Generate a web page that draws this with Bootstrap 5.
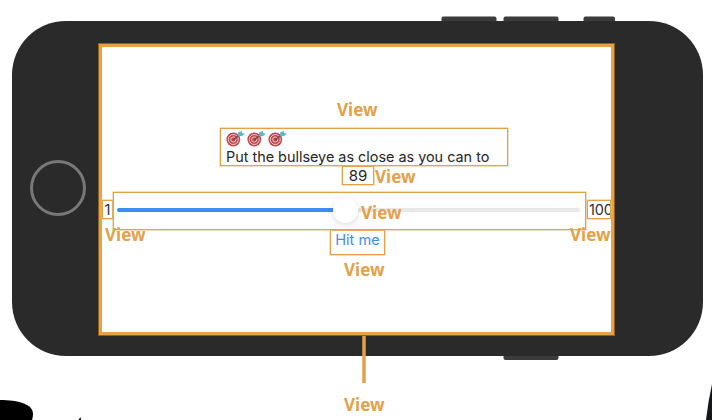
<!DOCTYPE html>
<html lang="en">
<head>
<meta charset="utf-8">
<meta name="viewport" content="width=device-width, initial-scale=1">
<title>Bullseye view hierarchy</title>
<link rel="stylesheet" href="https://cdn.jsdelivr.net/npm/bootstrap@5.3.0/dist/css/bootstrap.min.css">
<style>
  :root { --line: #e3a14a; --shell: #2a2a2a; }
  body { width: 712px; height: 420px; background: #fff; font-family: Inter, "Liberation Sans", sans-serif; }
  .phone-wrap { padding: 21px 9px 0 12px; }
  .phone { height: 335px; border-radius: 54px; background: var(--shell); padding: 22px 88px 20px 18px; }
  .home-button { width: 56px; height: 56px; border: 3px solid #787878; margin-top: -4px; }
  .screen { width: 517px; height: 293px; border: 4px solid #e9a242; outline: 1px solid #8d6228; outline-offset: -1px; padding-top: 81px; }
  .outlined { border: 1.5px solid var(--line); box-shadow: 0 0 0 .5px #eebd7c; }
  .prompt { width: 288px; height: 38px; margin-left: 118px; padding: 1px 5px 0; font-size: 14.4px; font-weight: 380; line-height: 18px; color: #262626; white-space: nowrap; }
  .targets { height: 18px; gap: 2px; }
  .target-value { width: 32px; height: 19px; margin-left: 240px; font-size: 15px; line-height: 17px; color: #262626; }
  .slider-row { height: 38px; margin-top: 7px; }
  .limit { height: 19px; margin-top: -4px; font-size: 14.5px; line-height: 18px; color: #303030; overflow: hidden; flex-shrink: 0; }
  .limit-low { width: 11px; }
  .limit-high { width: 24px; margin-left: 1px; padding-left: 1px; letter-spacing: -.2px; }
  .slider-box { width: 473px; padding: 0 5px 0 3px; flex-shrink: 0; }
  .track-on { width: 229px; height: 4px; background: #3d8df5; margin-top: -2px; }
  .knob { width: 25px; height: 25px; margin: -2px -12px 0 -13px; background: #fff; box-shadow: 0 2px 7px rgba(0,0,0,.14); z-index: 1; }
  .track-off { height: 4px; background: #e8e8e8; margin-top: -2px; }
  .hit { width: 55px; height: 25px; margin-left: 228px; font-size: 14.6px; line-height: 18px; color: #3e8def; }
  .note { position: absolute; font: 700 17px/20px "Noto Sans", "Open Sans", sans-serif; color: #e3a14a; z-index: 3; }
  .stage-art { position: absolute; inset: 0; z-index: 2; pointer-events: none; }
  .keys-art { position: absolute; inset: 0; }
</style>
<script src="https://cdn.jsdelivr.net/npm/bootstrap@5.3.0/dist/js/bootstrap.bundle.min.js"></script>
</head>
<body class="position-relative overflow-hidden m-0">

<svg class="keys-art" width="712" height="420" aria-hidden="true">
  <g fill="#3b3b3b">
    <rect x="441.500" y="16.500" width="55" height="8" rx="2"/>
    <rect x="503.500" y="16.500" width="55" height="8" rx="2"/>
    <rect x="583.500" y="16.500" width="31.500" height="8" rx="2"/>
    <rect x="503.500" y="352" width="55" height="8" rx="2"/>
  </g>
</svg>

<div class="phone-wrap position-relative">
  <div class="phone d-flex justify-content-between align-items-center">
    <div class="home-button rounded-circle"></div>
    <main class="screen bg-white">
      <div class="prompt outlined">
        <div class="targets d-flex align-items-center">
          <svg width="19" height="17" viewBox="0 0 19 17"><use href="#dart"/></svg>
          <svg width="19" height="17" viewBox="0 0 19 17"><use href="#dart"/></svg>
          <svg width="19" height="17" viewBox="0 0 19 17"><use href="#dart"/></svg>
        </div>
        <div>Put the bullseye as close as you can to</div>
      </div>
      <div class="target-value outlined text-center">89</div>
      <div class="slider-row d-flex align-items-center">
        <div class="limit limit-low outlined text-center">1</div>
        <div class="slider-box outlined h-100 d-flex align-items-center">
          <div class="track-on rounded-pill"></div>
          <div class="knob rounded-circle flex-shrink-0"></div>
          <div class="track-off rounded-pill flex-grow-1"></div>
        </div>
        <div class="limit limit-high outlined">100</div>
      </div>
      <div class="hit outlined text-center">Hit me</div>
    </main>
  </div>
</div>

<svg class="stage-art" width="712" height="420" aria-hidden="true">
  <defs>
    <g id="dart">
      <circle cx="7.300" cy="8.500" r="6.900" fill="#c4454a"/>
      <circle cx="7.300" cy="8.500" r="5" fill="none" stroke="#ecd0ce" stroke-width="1"/>
      <circle cx="7.300" cy="8.500" r="2.600" fill="none" stroke="#ecd0ce" stroke-width="1"/>
      <path d="M7.500 8.500 14 3.500" stroke="#6d3e48" stroke-width="1.200"/>
      <path d="M11.500 5.300 12.500 1 16 0 15.800 2 19 2.700 16 5Z" fill="#62b5c0"/>
    </g>
  </defs>
  <path d="M364 336V383" stroke="#e3a14a" stroke-width="3.500"/>
  <path d="M0 400C18 400 33 404 33 414Q33 417 32 420H0Z" fill="#000"/>
  <path d="M78.500 420 80.500 417 81 420Z" fill="#000"/>
  <path d="M712 384Q708 402 706 420H712Z" fill="#15151c"/>
</svg>

<span class="note" style="left:337px;top:100px">View</span>
<span class="note" style="left:375px;top:167px">View</span>
<span class="note" style="left:361px;top:203px">View</span>
<span class="note" style="left:105px;top:225px">View</span>
<span class="note" style="left:570px;top:225px">View</span>
<span class="note" style="left:344px;top:260px">View</span>
<span class="note" style="left:344px;top:395px">View</span>
</body>
</html>
